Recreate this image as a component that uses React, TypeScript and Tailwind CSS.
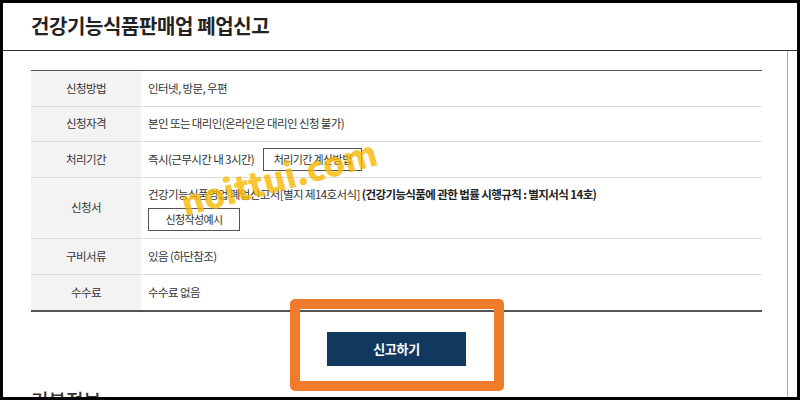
const rows: { label: string; tall?: boolean; key: string }[] = [
  { key: "method", label: "신청방법" },
  { key: "who", label: "신청자격" },
  { key: "period", label: "처리기간" },
  { key: "form", label: "신청서", tall: true },
  { key: "docs", label: "구비서류" },
  { key: "fee", label: "수수료" },
];

function Cell({ k }: { k: string }) {
  if (k === "method") return <span>인터넷, 방문, 우편</span>;
  if (k === "who") return <span>본인 또는 대리인(온라인은 대리인 신청 불가)</span>;
  if (k === "period")
    return (
      <div className="flex items-center gap-[9px]">
        <span>즉시(근무시간 내 3시간)</span>
        <button className="w-[99px] h-[23px] border border-[#555] bg-white text-[11px] text-[#333]">
          처리기간 계산방법
        </button>
      </div>
    );
  if (k === "form")
    return (
      <div className="flex flex-col items-start gap-[6px]">
        <span className="leading-[16px]">
          건강기능식품영업 폐업신고서[별지 제14호서식]{" "}
          <b className="font-bold text-[#222]">(건강기능식품에 관한 법률 시행규칙 : 별지서식 14호)</b>
        </span>
        <button className="w-[92px] h-[23px] border border-[#555] bg-white text-[11px] text-[#333]">
          신청작성예시
        </button>
      </div>
    );
  if (k === "docs") return <span>있음 (하단참조)</span>;
  return <span>수수료 없음</span>;
}

export default function App() {
  return (
    <div
      className="relative w-[800px] h-[400px] bg-black p-[3px] overflow-hidden"
      style={{ fontFamily: '"Noto Sans CJK KR", "Noto Sans", sans-serif' }}
    >
      <div className="w-full h-full bg-white flex flex-col overflow-hidden">
        {/* Title */}
        <div className="h-[48px] shrink-0 border-b border-[#333] pl-[28px] flex items-center">
          <h1 className="text-[20px] font-bold text-[#222] tracking-[-0.4px] leading-none pb-[1px]">
            건강기능식품판매업 폐업신고
          </h1>
        </div>

        {/* Content */}
        <div className="flex-1 shrink-0 w-[785px] border-r border-[#aaa] pl-[28px] pt-[19px]">
          <div className="w-[731px] border-t border-[#555] border-b text-[11.5px] tracking-[-0.6px] text-[#333]">
            {rows.map((r, i) => (
              <div
                key={r.key}
                className={`flex ${r.tall ? "h-[61px]" : i === 1 ? "h-[35px]" : "h-[36px]"} ${
                  i < rows.length - 1 ? "border-b border-[#dcdcdc]" : "border-b border-[#555]"
                }`}
              >
                <div className="w-[110px] shrink-0 bg-[#f3f3f3] flex items-center justify-center">
                  {r.label}
                </div>
                <div className={`flex-1 flex items-center pl-[7px] ${r.tall ? "pt-[1px]" : ""}`}>
                  <Cell k={r.key} />
                </div>
              </div>
            ))}
          </div>

          <div className="w-[731px] flex justify-center pt-[20px]">
            <button className="w-[139px] h-[34px] bg-[#11385f] text-white text-[13px] font-bold tracking-[-0.3px]">
              신고하기
            </button>
          </div>

          <h2 className="mt-[20px] text-[19px] font-medium text-[#333]">기본정보</h2>
        </div>
      </div>

      {/* watermark */}
      <div className="absolute left-[178px] top-[160px] -rotate-[15deg] text-[34px] font-black text-[#f5b800]/80 tracking-[0px] leading-none pointer-events-none select-none">
        noittui.com
      </div>

      {/* orange highlight */}
      <div className="absolute left-[290px] top-[299px] w-[214px] h-[92px] border-[10px] border-[#f07b2b] rounded-[5px] pointer-events-none" />
    </div>
  );
}
